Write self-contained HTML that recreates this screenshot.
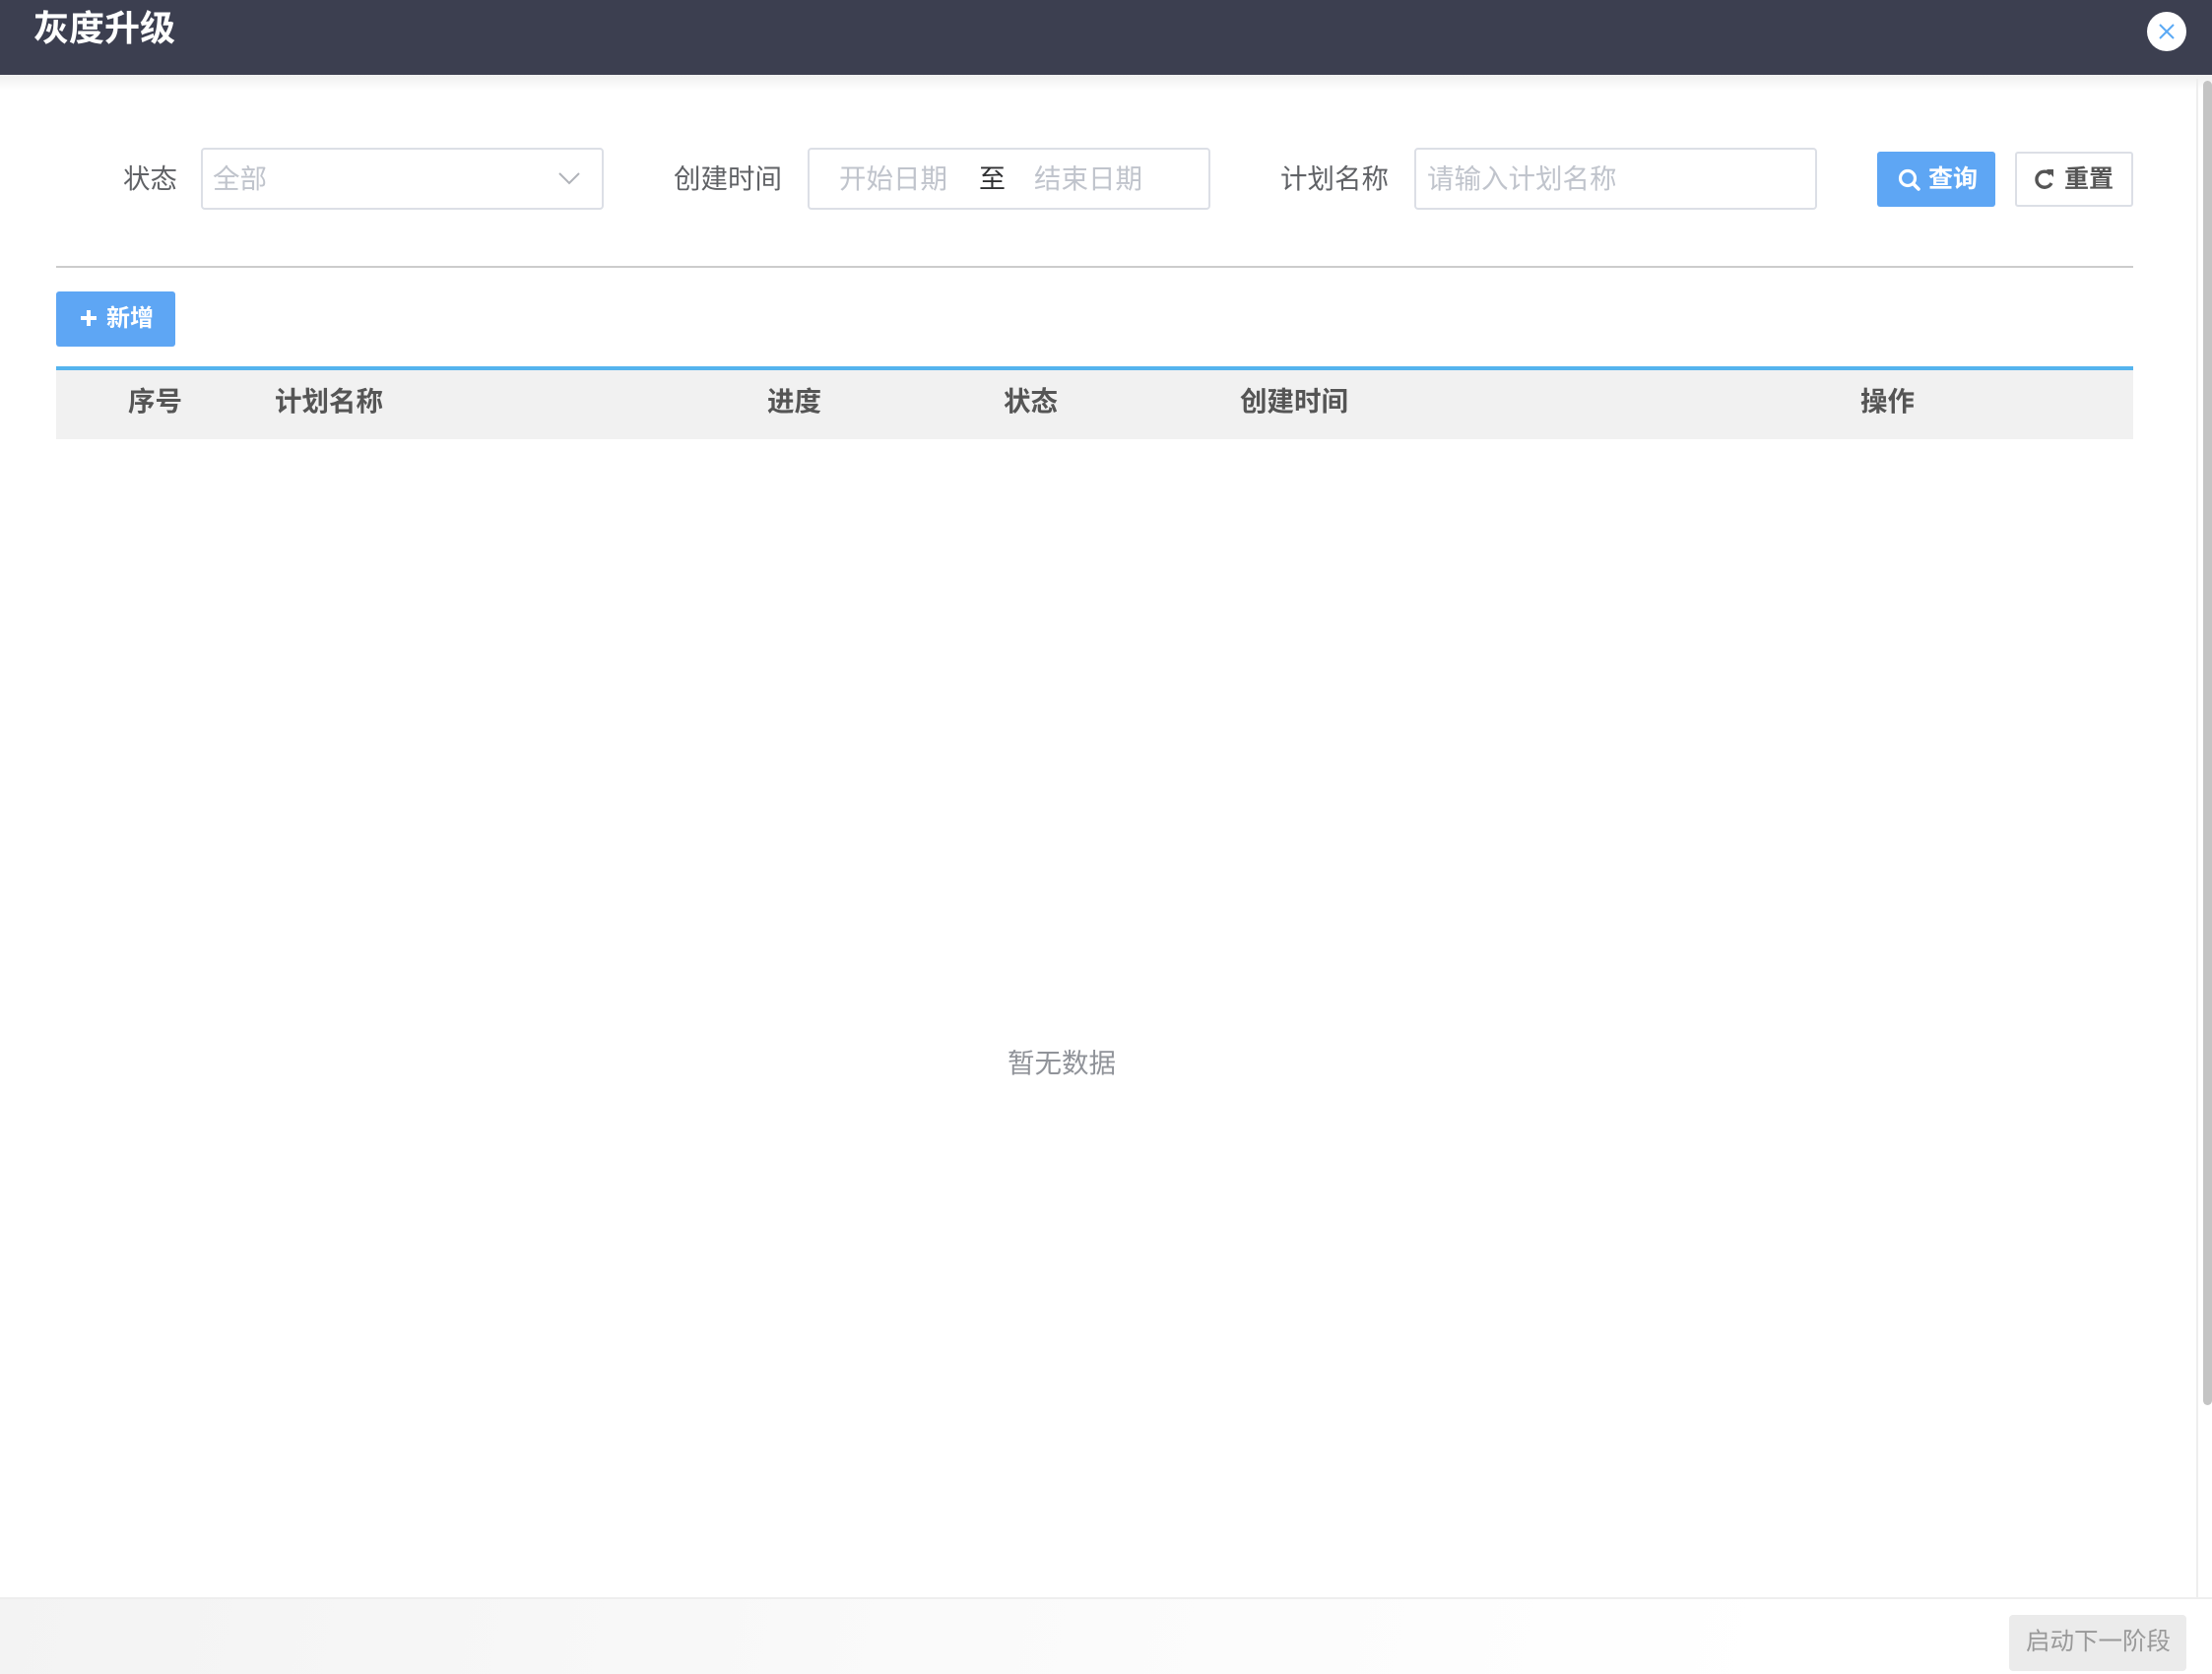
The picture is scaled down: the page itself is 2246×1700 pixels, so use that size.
<!DOCTYPE html>
<html><head><meta charset="utf-8"><style>
*{margin:0;padding:0;box-sizing:border-box}
body{width:2246px;height:1700px;background:#fff;position:relative;overflow:hidden;font-family:"Liberation Sans","Noto Sans CJK SC",sans-serif}
.a{position:absolute}
.hdr{left:0;top:0;width:2246px;height:76px;background:#3c3f50}
.lbl{font-size:27.5px;color:#606266;line-height:30px;top:167px}
.box{top:150px;height:63px;border:2px solid #dcdfe6;border-radius:4px;width:409px}
.ph{font-size:27.5px;color:#c0c4cc;line-height:30px;top:167px}
.th{font-size:27.5px;font-weight:bold;color:#555;top:393px;line-height:30px}
</style></head><body>
<div class="a hdr"></div>
<div class="a" style="left:34px;top:9px;font-size:36px;font-weight:bold;color:#fff;line-height:40px">灰度升级</div>
<div class="a" style="left:2180px;top:12px;width:40px;height:40px;border-radius:50%;background:#fff"></div>
<svg class="a" style="left:2188px;top:20px" width="24" height="24" viewBox="0 0 24 24"><path d="M5 5L19 19M19 5L5 19" stroke="#5aa9f5" stroke-width="2" fill="none"/></svg>
<div class="a" style="left:0;top:76px;width:2246px;height:16px;background:linear-gradient(#f0f0f0,#fff)"></div>
<div class="a" style="left:2230px;top:80px;width:2px;height:1543px;background:#eee"></div>
<div class="a" style="left:2237px;top:82px;width:9px;height:1345px;background:#c4c4c4;border-radius:5px"></div>

<div class="a lbl" style="left:125px">状态</div>
<div class="a box" style="left:204px"></div>
<div class="a ph" style="left:216px">全部</div>
<svg class="a" style="left:566px;top:173px" width="24" height="16" viewBox="0 0 24 16"><path d="M2 3L12 13L22 3" stroke="#b0b3b9" stroke-width="2" fill="none"/></svg>
<div class="a lbl" style="left:684px">创建时间</div>
<div class="a box" style="left:820px"></div>
<div class="a ph" style="left:852px">开始日期</div>
<div class="a" style="left:994px;top:167px;font-size:27px;color:#303133;line-height:30px">至</div>
<div class="a ph" style="left:1050px">结束日期</div>
<div class="a lbl" style="left:1300px">计划名称</div>
<div class="a box" style="left:1436px"></div>
<div class="a ph" style="left:1449px">请输入计划名称</div>

<div class="a" style="left:1906px;top:154px;width:120px;height:56px;background:#5ea6f4;border-radius:3px"></div>
<svg class="a" style="left:1926px;top:170px" width="26" height="26" viewBox="0 0 26 26"><circle cx="11" cy="11" r="7.5" stroke="#fff" stroke-width="3.2" fill="none"/><path d="M16.5 16.5L22 22" stroke="#fff" stroke-width="3.5" stroke-linecap="round"/></svg>
<div class="a" style="left:1958px;top:167px;font-size:25px;font-weight:bold;color:#fff;line-height:30px">查询</div>
<div class="a" style="left:2046px;top:154px;width:120px;height:56px;border:2px solid #dcdfe6;border-radius:3px;background:#fff"></div>
<svg class="a" style="left:2064px;top:169px" width="24" height="26" viewBox="0 0 24 26"><path d="M18 8A8 8 0 1 0 19 17" stroke="#555" stroke-width="3.4" fill="none"/><path d="M14 3L21 3L21 11Z" fill="#555"/></svg>
<div class="a" style="left:2096px;top:167px;font-size:25px;font-weight:bold;color:#555;line-height:30px">重置</div>

<div class="a" style="left:57px;top:270px;width:2109px;height:2px;background:#ccc"></div>
<div class="a" style="left:57px;top:296px;width:121px;height:56px;background:#5ea6f4;border-radius:3px"></div>
<svg class="a" style="left:80px;top:313px" width="20" height="20" viewBox="0 0 20 20"><path d="M10 2V18M2 10H18" stroke="#fff" stroke-width="4"/></svg>
<div class="a" style="left:108px;top:309px;font-size:24px;font-weight:bold;color:#fff;line-height:30px">新增</div>

<div class="a" style="left:57px;top:372px;width:2109px;height:4px;background:#55b4ee"></div>
<div class="a" style="left:57px;top:376px;width:2109px;height:70px;background:#f1f1f1"></div>
<div class="a th" style="left:130px">序号</div>
<div class="a th" style="left:279px">计划名称</div>
<div class="a th" style="left:779px">进度</div>
<div class="a th" style="left:1019px">状态</div>
<div class="a th" style="left:1259px">创建时间</div>
<div class="a th" style="left:1889px">操作</div>
<div class="a" style="left:1023px;top:1065px;font-size:27.5px;color:#909399;line-height:30px">暂无数据</div>

<div class="a" style="left:0;top:1622px;width:2246px;height:2px;background:#eee"></div>
<div class="a" style="left:0;top:1624px;width:1900px;height:76px;background:linear-gradient(100deg,#f3f3f3 0%,#fafafa 50%,#fff 95%)"></div>
<div class="a" style="left:2040px;top:1640px;width:180px;height:57px;background:#ebebeb;border-radius:4px"></div>
<div class="a" style="left:2057px;top:1653px;font-size:24.5px;color:#999;line-height:30px">启动下一阶段</div>
</body></html>
